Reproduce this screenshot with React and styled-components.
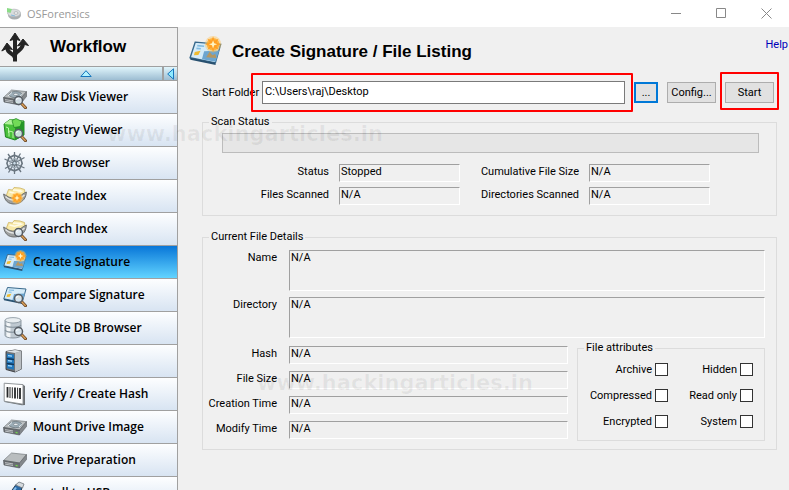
import React from "react"
import styled, { createGlobalStyle, css } from "styled-components"

const theme = {
  face: "#f0f0f0",
  line: "#a0a0a0",
  group: "#dcdcdc",
  accent: "#0078d7",
  mark: "#ff0000",
  ui: `Roboto, "Liberation Sans", sans-serif`,
  heading: `"Liberation Sans", Arial, sans-serif`,
  nav: `"Open Sans", "Noto Sans", sans-serif`,
}

/* icon parts, all on a 24 x 24 grid */

const Lens = () => (
  <g>
    <path d="M18.5 18.5l4 4.2" stroke="#6b4420" strokeWidth="3" strokeLinecap="round" />
    <path d="M18.7 18.7l3.6 3.8" stroke="#d9a15c" strokeWidth="1.4" strokeLinecap="round" />
    <circle cx="15.5" cy="15.5" r="4" fill="#e4f0f8" fillOpacity=".85" stroke="#555b62" strokeWidth="1.5" />
    <path d="M13.4 15a2.4 2.4 0 0 1 2-1.8" stroke="#fff" strokeWidth="1" fill="none" />
  </g>
)

const Spark = ({ x = 17.5, y = 6 }) => (
  <g transform={`translate(${x} ${y})`}>
    <circle r="6" fill="#ffc65c" fillOpacity=".45" />
    <circle r="4.6" fill="#ffae2e" fillOpacity=".85" />
    <path
      d="M0-5.6L1.2-2.6 4-4 2.600-1.200 5.600 0 2.600 1.200 4 4 1.200 2.600 0 5.600-1.200 2.600-4 4-2.600 1.200-5.600 0-2.600-1.200-4-4-1.200-2.600z"
      fill="#ffa024"
    />
    <path d="M0-3L.8-.8 3 0 .8.8 0 3-.8.8-3 0-.8-.8z" fill="#fff6c4" />
  </g>
)

const Drive = ({ platter }) => (
  <g>
    <path d="M.5 12.5L8.5 5l15 1.600-7 8.400z" fill="#b9bdbf" stroke="#777c80" strokeWidth=".7" />
    <path d="M.5 12.5l16 2.500v5L1 17z" fill="#6b6f73" stroke="#4c5054" strokeWidth=".6" />
    <path d="M16.5 15l7-8.400v4.900l-7 8.500z" fill="#83888c" stroke="#5c6064" strokeWidth=".6" />
    <path d="M2 14.600l8 1.300M2.200 16.200l7.800 1.200" stroke="#d2d6d8" strokeWidth=".8" />
    <path d="M12.600 17.400l2 .4" stroke="#72db4b" strokeWidth="1.200" />
    {platter && (
      <g>
        <ellipse cx="12.5" cy="9.600" rx="6.400" ry="3.100" fill="#9aabb5" stroke="#65727a" strokeWidth=".7" />
        <ellipse cx="12.800" cy="9.400" rx="2.200" ry="1.100" fill="#eef3f6" stroke="#616b73" strokeWidth=".5" />
        <path d="M5 11l4-3.600M16 12l3.500-3" stroke="#e6edf1" strokeWidth="1" />
      </g>
    )}
  </g>
)

const Tray = () => (
  <g>
    <path d="M3.500 11l2-5.500 4 .5 1.500-2.500L17 4l4.500 1.500.5 4-6 5-10 1z" fill="#f8e9a8" stroke="#cdb260" strokeWidth=".8" />
    <path d="M6.500 8l5 1.200 8-2.200M10 6l8 .6" stroke="#fffbe6" strokeWidth="1.500" />
    <path d="M.6 10c2 .6 4 3.600 9 4 6 .4 9-4 13.800-6-.2 6-3.400 9.500-8.400 11.500-3 1-7 .6-9.500-.8C2.500 17 1 13.500.6 10z" fill="#9ea09f" stroke="#5b5d5e" strokeWidth=".8" />
    <path d="M2.500 12.500c4 4 8 4 12 3 3-.8 5-2.500 7-4.500" stroke="#e4e6e6" strokeWidth="1.300" fill="none" />
  </g>
)

const Card = () => (
  <g>
    <path d="M4.500 4.500L23 6l-3.800 13.500L.8 15.800z" fill="#d5ebf8" stroke="#38698c" strokeWidth="1" />
    <path d="M11 11l11-.5-2.600 8.300-10-1.900z" fill="#6da5cf" />
    <path d="M.8 15.800l18.400 3.700.2 1.600L1 17.300z" fill="#28506f" />
    <path d="M6 7l5 .4M5.400 9l3.200.3" stroke="#82bce2" strokeWidth="1.100" />
    <path d="M4.200 11.600l4.200-.8-1.600 3-3.200.2z" fill="#efbb30" />
    <path d="M12.500 15.500l2.500-4 2 2.500 2-1 1 3z" fill="#b59660" />
  </g>
)

const Database = () => (
  <g>
    <path d="M2 4.500v14.800c0 3.600 16 3.600 16 0V4.500z" fill="#bfc9d1" stroke="#77848e" strokeWidth=".8" />
    <path d="M3.500 6v14c1 .8 2.200 1.200 4 1.300V7z" fill="#f2f5f7" />
    <ellipse cx="10" cy="4.300" rx="8" ry="2.700" fill="#e9eef1" stroke="#83909a" strokeWidth=".8" />
    <path d="M2 9c1.500 3 14.500 3 16 0M2 14c1.500 3 14.500 3 16 0" stroke="#83909a" strokeWidth="1.100" fill="none" />
  </g>
)

const Cube = () => (
  <g>
    <path d="M1 6l6-4.500 14 1.500v14l-9 5L2.500 19z" fill="#49c03b" stroke="#167a18" strokeWidth=".9" />
    <path d="M1 6l6-4.500 14 1.500-9 4z" fill="#b1f29a" />
    <path d="M12 7l9-4v14l-9 5z" fill="#239627" />
    <path d="M9 2.500l4-2 6 3-2 5-6 1z" fill="#72db57" stroke="#1b821f" strokeWidth=".7" />
    <path d="M3 9l2.500 1v5M6 18.500V13l4 1v6" stroke="#b9f5a8" strokeWidth="1" fill="none" />
  </g>
)

const Web = () => (
  <g fill="none" stroke="#6a7680">
    <path d="M11.500 1v22M1.500 8l20 9M21.500 6.500l-19.500 11M5 3l13 18M17.500 2.500l-12 19" strokeWidth="1.300" />
    <path d="M11.500 4.200l5.800 2.500 1.900 5.700-2.600 5.400-5.100 2-5.500-2-2.100-5.500 2.100-5.600z" strokeWidth="1.600" />
    <path d="M11.500 7.600l3.400 1.500 1.200 3.200-1.500 3.200-3.100 1.200-3.200-1.200L7 12.300l1.300-3.200z" stroke="#9ba8b2" strokeWidth="1.300" />
    <circle cx="11.500" cy="12.200" r="1.800" fill="#cbdce8" strokeWidth="1" />
  </g>
)

const Server = () => (
  <g>
    <path d="M3 2.500L12 1l6.500 1v18L12 23 3 20.500z" fill="#6e7276" stroke="#35383b" strokeWidth=".9" />
    <path d="M12 4l6.500-2v18L12 23z" fill="#babfc3" />
    <path d="M3 2.500L12 1l6.500 1L12 4z" fill="#dde1e4" />
    <path d="M3.800 4.500l7.200 1v15.300l-7.200-1.600z" fill="#2277bb" />
    <path d="M3.800 9.500l7.200 1M3.800 14.500l7.200 1" stroke="#11395e" strokeWidth="1.300" />
    <path d="M5 6.700l4 .5M5 11.700l4 .5M5 16.700l4 .5" stroke="#a4dbff" strokeWidth="1.200" />
  </g>
)

const Barcode = () => (
  <g>
    <path d="M2 1.500l18 1.200 2 1.200v19l-3 .4L1.500 20z" fill="#6c7073" />
    <path d="M1.200 1.200L20 2.600v19.600L1.200 19.200z" fill="#fff" stroke="#888d91" strokeWidth=".9" />
    <path d="M4.500 5v10.500M12 5.500v11M17 6v11" stroke="#26282a" strokeWidth="1.800" />
    <path d="M7 5v11M9.300 5.300v11M14.600 5.700v11" stroke="#26282a" strokeWidth="1" />
  </g>
)

const UsbStick = () => (
  <g>
    <path d="M2 19L13 3.500l6 2.500-1 5L8 23z" fill="#2b6aa6" stroke="#21374b" strokeWidth=".9" />
    <path d="M12.500 4l3.500-3 5 2-1.500 4z" fill="#d5dade" stroke="#6d757b" strokeWidth=".8" />
    <path d="M5 17.500L13 6.500" stroke="#84bdec" strokeWidth="2" />
  </g>
)

const Icon = ({ children, size = 24 }) => (
  <svg width={size} height={size} viewBox="0 0 24 24" fill="none" aria-hidden="true">
    {children}
  </svg>
)

const items = [
  { name: "Raw Disk Viewer", icon: <><Drive platter /><Lens /></> },
  { name: "Registry Viewer", icon: <><Cube /><Lens /></> },
  { name: "Web Browser", icon: <Web /> },
  { name: "Create Index", icon: <><Tray /><Spark x={14} y={14} /></> },
  { name: "Search Index", icon: <><Tray /><Lens /></> },
  { name: "Create Signature", icon: <><Card /><Spark /></>, active: true },
  { name: "Compare Signature", icon: <><Card /><Lens /></> },
  { name: "SQLite DB Browser", icon: <><Database /><Lens /></> },
  { name: "Hash Sets", icon: <Server /> },
  { name: "Verify / Create Hash", icon: <Barcode /> },
  { name: "Mount Drive Image", icon: <Drive platter /> },
  { name: "Drive Preparation", icon: <Drive /> },
  { name: "Install to USB", icon: <UsbStick /> },
]

const status = [
  ["Status", "Stopped"],
  ["Cumulative File Size", "N/A"],
  ["Files Scanned", "N/A"],
  ["Directories Scanned", "N/A"],
]

const attributes = ["Archive", "Hidden", "Compressed", "Read only", "Encrypted", "System"]

const toId = name => name.toLowerCase().replace(/\s+/g, "-")

const Field = ({ name, value, tall }) => (
  <>
    <FieldLabel htmlFor={toId(name)}>{name}</FieldLabel>
    <Readout id={toId(name)} $tall={tall}>
      {value}
    </Readout>
  </>
)

const App = () => (
  <Window>
    <GlobalStyle />
    <TitleBar>
      <svg width="16" height="14" viewBox="0 0 16 14" aria-hidden="true">
        <ellipse cx="8.500" cy="8" rx="6.500" ry="4.500" fill="#a9adaf" />
        <ellipse cx="8" cy="6" rx="6.500" ry="3.800" fill="#d9dcdd" stroke="#b1b5b7" strokeWidth=".7" />
        <ellipse cx="10" cy="6" rx="2" ry="1.200" fill="#fff" stroke="#989da0" strokeWidth=".7" />
        <path d="M1 1l5 1-1.500 4L1 5z" fill="#8bdc87" />
        <path d="M5 8l4 1" stroke="#83b7da" />
      </svg>
      <AppName>OSForensics</AppName>
      <WindowButton aria-label="Minimize">
        <svg width="11" height="11" fill="none" stroke="#888"><path d="M0 5.500h10" /></svg>
      </WindowButton>
      <WindowButton aria-label="Maximize">
        <svg width="11" height="11" fill="none" stroke="#888"><path d="M.5.5h9v9h-9z" /></svg>
      </WindowButton>
      <WindowButton aria-label="Close">
        <svg width="11" height="11" fill="none" stroke="#888"><path d="M.5.5l10 10M10.500.5l-10 10" /></svg>
      </WindowButton>
    </TitleBar>

    <Body>
      <Sidebar>
        <SidebarHeader>
          <svg width="28" height="30" viewBox="0 0 28 30" fill="none" aria-hidden="true">
            <path
              d="M14 29.500V6M14 26C13 21 6 22 6 15M14 23C15 18 22 19 22 11"
              stroke="#242424"
              strokeWidth="4"
            />
            <path
              d="M14 1l5 7.500-3.500-1h-3l-3.500 1zM6 11l5.500 6.500-4-.8-3 .3L.8 19zM22 7l5.500 6.500-3.700-1-3.300.2-4 1.300z"
              fill="#242424"
              stroke="#242424"
              strokeLinejoin="round"
            />
          </svg>
          <SidebarTitle>Workflow</SidebarTitle>
        </SidebarHeader>
        <Strip>
          <StripButton aria-label="Scroll up">
            <svg width="12" height="7" viewBox="0 0 12 7">
              <path d="M6 .7l5.200 5.800H.8z" fill="#b3f2ff" stroke="#1676bd" />
            </svg>
          </StripButton>
          <StripButton aria-label="Collapse" $small>
            <svg width="7" height="12" viewBox="0 0 7 12">
              <path d="M.7 6L6.500.8v10.400z" fill="#8feaff" stroke="#1676bd" />
            </svg>
          </StripButton>
        </Strip>
        {items.map(item => (
          <Item key={item.name} $active={item.active}>
            <Icon>{item.icon}</Icon>
            {item.name}
          </Item>
        ))}
      </Sidebar>

      <Main>
        <Header>
          <Icon size={33}>
            <Card />
            <Spark />
          </Icon>
          <Title>Create Signature / File Listing</Title>
          <HelpLink href="#help">Help</HelpLink>
        </Header>

        <FolderRow>
          <label htmlFor="folder">Start Folder</label>
          <FolderMark>
            <FolderInput id="folder" defaultValue="C:\Users\raj\Desktop" />
          </FolderMark>
          <Button $narrow $focused>...</Button>
          <Button>Config...</Button>
          <StartMark>
            <Button>Start</Button>
          </StartMark>
        </FolderRow>

        <ScanGroup>
          <legend>Scan Status</legend>
          <Progress value="0" max="100" aria-label="Scan progress" />
          <StatusGrid>
            {status.map(([name, value]) => (
              <Field key={name} name={name} value={value} />
            ))}
          </StatusGrid>
        </ScanGroup>

        <DetailsGroup>
          <legend>Current File Details</legend>
          <PathGrid>
            <Field name="Name" value="N/A" tall />
            <Field name="Directory" value="N/A" tall />
          </PathGrid>
          <Split>
            <InfoGrid>
              <Field name="Hash" value="N/A" />
              <Field name="File Size" value="N/A" />
              <Field name="Creation Time" value="N/A" />
              <Field name="Modify Time" value="N/A" />
            </InfoGrid>
            <AttributeGroup>
              <legend>File attributes</legend>
              <AttributeGrid>
                {attributes.map(name => (
                  <CheckLabel key={name}>
                    {name}
                    <Checkbox type="checkbox" />
                  </CheckLabel>
                ))}
              </AttributeGrid>
            </AttributeGroup>
          </Split>
        </DetailsGroup>
      </Main>
    </Body>

    <Watermark $left={107} $top={120}>www.hackingarticles.in</Watermark>
    <Watermark $left={257} $top={369}>www.hackingarticles.in</Watermark>
  </Window>
)

export default App

const GlobalStyle = createGlobalStyle`
  * {
    box-sizing: border-box;
  }

  body {
    margin: 0;
  }

  button, input {
    font: inherit;
    color: inherit;
  }
`

const Window = styled.div`
  position: relative;
  display: flex;
  flex-direction: column;
  height: 100vh;
  overflow: hidden;
  background: ${theme.face};
  color: #000;
  font: 11px/14px ${theme.ui};
`

const TitleBar = styled.header`
  display: flex;
  flex: none;
  align-items: center;
  height: 27px;
  padding-left: 6px;
  background: #fff;
`

const AppName = styled.span`
  flex: 1;
  padding-left: 5px;
  color: #999;
  font: 11px/16px "Open Sans", "Noto Sans", sans-serif;
`

const WindowButton = styled.button`
  display: grid;
  place-items: center;
  width: 45px;
  height: 22px;
  padding: 0;
  border: 0;
  background: none;
`

const Body = styled.div`
  display: flex;
  flex: 1;
  min-height: 0;
`

const Sidebar = styled.nav`
  flex: none;
  width: 178px;
  overflow: hidden;
  border-top: 1px solid ${theme.line};
  border-right: 1px solid ${theme.line};
`

const SidebarHeader = styled.div`
  display: flex;
  align-items: center;
  height: 38px;
  padding-left: 1px;
`

const headingFont = css`
  margin: 0;
  font: bold 17px/20px ${theme.heading};
`

const SidebarTitle = styled.h2`
  ${headingFont}
  padding-left: 21px;
`

const Strip = styled.div`
  display: flex;
  height: 15px;
  border: solid ${theme.line};
  border-width: 1px 0;
  background: linear-gradient(#e0f5fb, #9dbdd2);
`

const StripButton = styled.button`
  display: grid;
  flex: ${({ $small }) => ($small ? "0 0 15px" : "1")};
  place-items: center;
  padding: 0 0 0 ${({ $small }) => ($small ? 0 : 10)}px;
  border: 0;
  border-left: ${({ $small }) => ($small ? `2px solid ${theme.line}` : "0")};
  background: none;
`

const Item = styled.button`
  display: flex;
  align-items: center;
  width: 100%;
  height: 33px;
  gap: 6px;
  padding: 0 0 0 3px;
  border: 0;
  border-bottom: 1px solid ${theme.line};
  background: ${({ $active }) =>
    $active ? "linear-gradient(#0876d8, #62d4ff)" : "linear-gradient(#fdfeff, #d8e4f2)"};
  font: 600 12px/16px ${theme.nav};
  text-align: left;
  white-space: nowrap;
`

const Main = styled.main`
  flex: 1;
  min-width: 0;
  padding: 11px 12px 0 24px;
`

const Header = styled.div`
  display: flex;
  align-items: center;
  height: 28px;
  margin: 0 -11px 0 -13px;
`

const Title = styled.h1`
  ${headingFont}
  flex: 1;
  padding-left: 10px;
`

const HelpLink = styled.a`
  align-self: flex-start;
  color: #0000b8;
  text-decoration: none;
`

const FolderRow = styled.div`
  display: grid;
  grid-template-columns: 51px 1fr auto auto auto;
  align-items: center;
  gap: 9px;
  margin: 15px 3px 11px 0;
  white-space: nowrap;
`

const FolderMark = styled.div`
  position: relative;
  display: flex;

  &::after {
    content: "";
    position: absolute;
    inset: -8px -8px -8px -11px;
    border: 2px solid ${theme.mark};
    border-radius: 1px;
    pointer-events: none;
  }
`

const StartMark = styled(FolderMark)`
  &::after {
    inset: -10px -5px -7px;
  }
`

const FolderInput = styled.input`
  width: 100%;
  height: 23px;
  padding: 0 2px 2px;
  border: 1px solid #7a7a7a;
  background: #fff;
  outline: none;
`

const Button = styled.button`
  width: ${({ $narrow }) => ($narrow ? 24 : 49)}px;
  height: 21px;
  padding: 0;
  border: ${({ $focused }) => ($focused ? `2px solid ${theme.accent}` : "1px solid #adadad")};
  background: #e1e1e1;
`

const groupBox = css`
  min-width: 0;
  margin: 0;
  border: 1px solid ${theme.group};

  > legend {
    margin-left: 6px;
    padding: 0 2px;
    white-space: nowrap;
  }
`

const ScanGroup = styled.fieldset`
  ${groupBox}
  padding: 4px 17px 10px 19px;

  > legend {
    margin-left: -13px;
  }
`

const DetailsGroup = styled.fieldset`
  ${groupBox}
  margin-top: 14px;
  padding: 6px 11px 8px 0;
`

const AttributeGroup = styled.fieldset`
  ${groupBox}
  flex: 0 0 188px;
  padding: 8px 11px 12px 0;
`

const Progress = styled.progress`
  display: block;
  width: 100%;
  height: 20px;
  border: 1px solid #bcbcbc;
  background: #e6e6e6;
  appearance: none;

  &::-webkit-progress-bar {
    background: #e6e6e6;
  }
`

const StatusGrid = styled.div`
  display: grid;
  grid-template-columns: 107px 121px 109px 121px;
  gap: 5px 10px;
  margin-top: 11px;
`

const PathGrid = styled.div`
  display: grid;
  grid-template-columns: 74px 1fr;
  gap: 6px 12px;
`

const InfoGrid = styled(PathGrid)`
  flex: 1;
  row-gap: 7px;
  padding-top: 5px;
  align-content: start;
`

const Split = styled.div`
  display: flex;
  gap: 9px;
  margin-top: 3px;
`

const FieldLabel = styled.label`
  padding-top: 1px;
  text-align: right;
  white-space: nowrap;
`

const Readout = styled.output`
  height: ${({ $tall }) => ($tall ? 41 : 18)}px;
  padding-left: 1px;
  border: 1px solid #fff;
  border-top-color: ${theme.line};
  border-left-color: ${theme.line};
`

const AttributeGrid = styled.div`
  display: grid;
  grid-template-columns: 90px 85px;
  row-gap: 13px;
`

const CheckLabel = styled.label`
  display: flex;
  align-items: center;
  justify-content: flex-end;
  gap: 3px;
  height: 13px;
`

const Checkbox = styled.input`
  width: 13px;
  height: 13px;
  margin: 0;
  border: 1px solid #333;
  background: #fff;
  appearance: none;
`

const Watermark = styled.div`
  position: absolute;
  top: ${({ $top }) => $top}px;
  left: ${({ $left }) => $left}px;
  color: rgba(0, 0, 0, 0.06);
  font: bold 21px/28px "DejaVu Sans", sans-serif;
  pointer-events: none;
  white-space: nowrap;
`
